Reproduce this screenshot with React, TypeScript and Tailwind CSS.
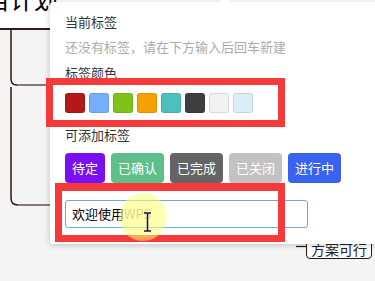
import React from "react";

const swatches = [
  "#b3191a",
  "#75aefc",
  "#7ec418",
  "#f6a102",
  "#4dbfbf",
  "#3e3e3e",
  "#f2f2f2",
  "#daeef8",
];

const tags = [
  { label: "待定", color: "bg-[#7a10f0]" },
  { label: "已确认", color: "bg-[#5fbf89]" },
  { label: "已完成", color: "bg-[#646464]" },
  { label: "已关闭", color: "bg-[#c2c2c2]" },
  { label: "进行中", color: "bg-[#3a62f1]" },
];

const App = () => {
  return (
    <div className="relative w-[375px] h-[281px] overflow-hidden bg-[#f4f4f4] font-['Noto_Sans_CJK_SC',sans-serif]">
      {/* mind map canvas behind the popover */}
      <div className="absolute left-[-60px] top-[-20px] w-[480px] h-[50px] bg-white border-b-2 border-[#2e1c1a]">
        <span className="absolute left-[22px] top-[7px] text-[24px] leading-[24px] text-black whitespace-nowrap">
          项目计划
        </span>
      </div>
      <svg className="absolute left-0 top-0" width="375" height="281">
        <path d="M11 30 V79 Q11 85 17 85" fill="none" stroke="#2a1414" strokeWidth="1.5" />
        <path d="M17 85 H52" fill="none" stroke="#877973" strokeWidth="2" />
        <path d="M11 87 V198 Q11 205 18 205" fill="none" stroke="#2a1414" strokeWidth="1.5" />
        <path d="M18 205 H52" fill="none" stroke="#877973" strokeWidth="2" />
        <path d="M296 246.5 H307" fill="none" stroke="#2a1414" strokeWidth="1.2" />
      </svg>
      <div className="absolute left-[306px] top-[236px] w-[66px] h-[23px] bg-white border border-[#2a1414] rounded-[4px] flex items-end justify-center pb-[1px]">
        <span className="text-[14px] leading-[16px] text-[#222]">方案可行</span>
      </div>

      {/* tag popover */}
      <div className="absolute left-[50px] top-[2px] w-[345px] h-[242px] bg-white rounded-[3px] shadow-[0_1px_6px_rgba(0,0,0,0.22)] pt-[10px] pl-[15px]">
        <div className="absolute left-[170px] top-[-5px] w-[10px] h-[10px] bg-white rotate-45 shadow-[-1px_-1px_2px_rgba(0,0,0,0.12)]" />
        <div className="relative flex flex-col text-[13px] leading-[20px]">
          <div className="text-[#333]">当前标签</div>
          <div className="mt-[5px] text-[#ababab] whitespace-nowrap">
            还没有标签，请在下方输入后回车新建
          </div>
          <div className="mt-[6px] text-[#333]">标签颜色</div>
          <div className="mt-[10px] flex gap-1">
            {swatches.map((c) => (
              <div
                key={c}
                className="w-5 h-5 rounded-[3px] border border-black/10"
                style={{ backgroundColor: c }}
              />
            ))}
          </div>
          <div className="mt-[12px] text-[#333]">可添加标签</div>
          <div className="mt-[8px] flex gap-[6px]">
            {tags.map((t) => (
              <div
                key={t.label}
                className={`${t.color} h-[30px] px-[7px] rounded-[4px] flex items-center text-white`}
              >
                {t.label}
              </div>
            ))}
          </div>
          <div className="mt-[17px] w-[243px] h-[28px] border border-[#6aa8ee] rounded-[3px] flex items-center px-[6px]">
            <span className="text-black">欢迎使用</span>
            <span className="text-[#9c9c9c]">WPS</span>
          </div>
        </div>
      </div>

      {/* annotation boxes */}
      <div className="absolute left-[46px] top-[78px] w-[239px] h-[49px] border-[7px] border-[#f43a3a]" />
      <div className="absolute left-[55px] top-[183px] w-[230px] h-[59px] border-[7px] border-t-8 border-[#f43a3a]" />

      {/* cursor highlight */}
      <div className="absolute left-[119px] top-[193px] w-[48px] h-[48px] rounded-full bg-[radial-gradient(circle,rgba(255,255,120,0.6)_55%,rgba(255,255,120,0.25)_100%)]" />
      <svg className="absolute left-[143px] top-[212px]" width="9" height="20" viewBox="0 0 9 20">
        <path d="M1 1 H8 M4.5 1 V19 M1 19 H8" stroke="#14145a" strokeWidth="1.5" fill="none" />
      </svg>
    </div>
  );
};

export default App;
